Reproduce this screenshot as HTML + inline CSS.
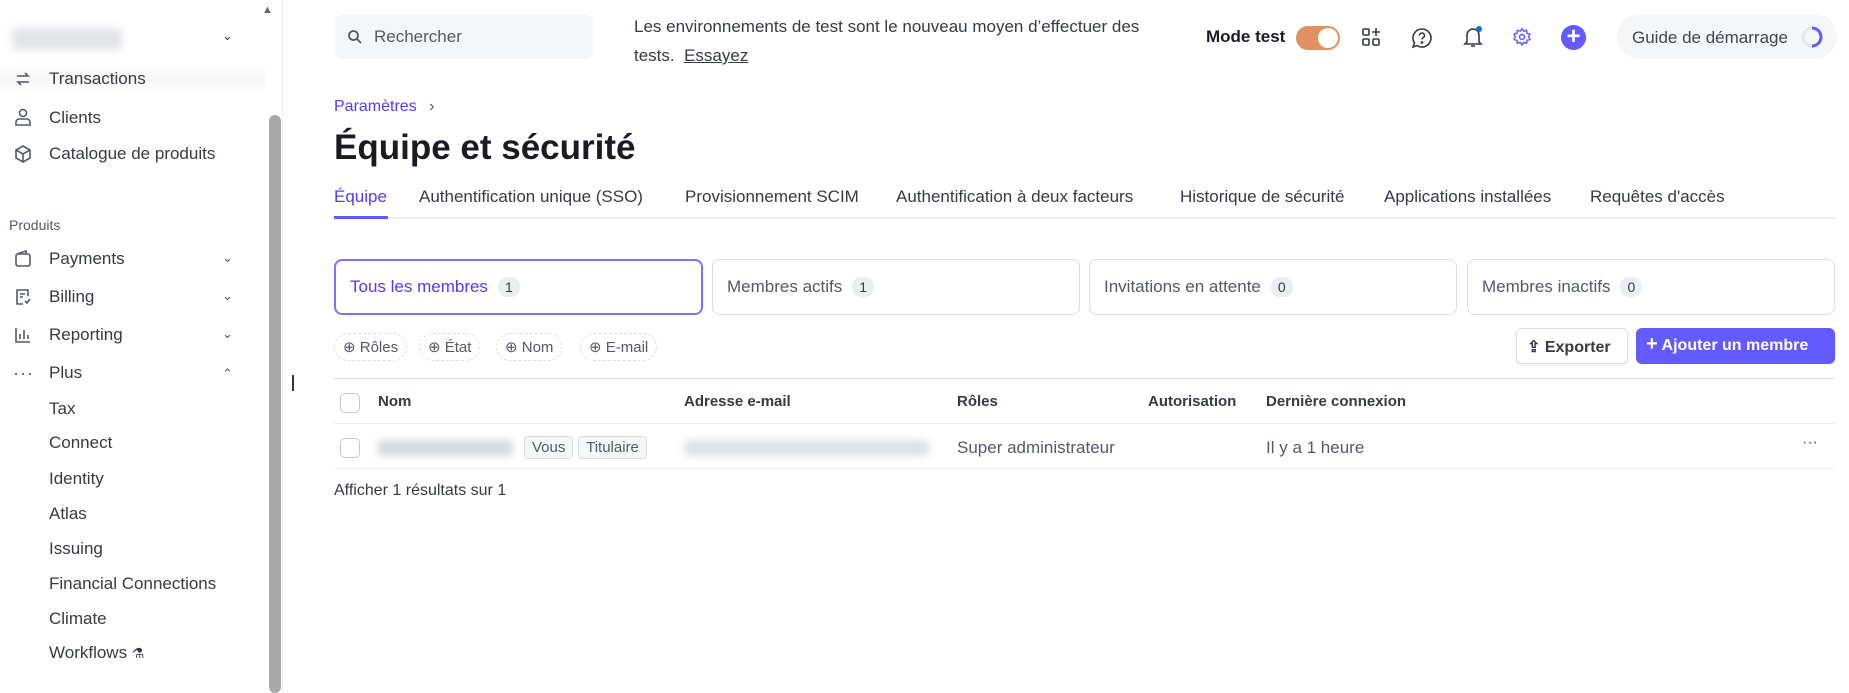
<!DOCTYPE html>
<html><head><meta charset="utf-8"><style>
*{box-sizing:border-box;margin:0;padding:0}
body{width:1849px;height:693px;overflow:hidden;background:#fff;font-family:"Liberation Sans",sans-serif;color:#353a44;font-size:17px;position:relative}
.a{position:absolute;white-space:nowrap}
.side{position:absolute;left:0;top:0;width:283px;height:693px;border-right:1px solid #ebeef1}
.it{position:absolute;left:49px;font-size:17px;color:#353a44}
.ic{position:absolute;left:13px;width:20px;height:20px}
.chev{position:absolute;left:222px;font-size:13px;color:#555}
.tab{position:absolute;top:187px;font-size:17px;color:#353a44}
.card{position:absolute;top:259px;height:56px;border:1px solid #d8dee4;border-radius:8px;padding:0 14px;display:flex;align-items:center;font-size:17px;color:#545969}
.badge{display:inline-block;margin-left:10px;background:#ebeef1;border-radius:9px;font-size:14px;padding:2px 7px;color:#353a44}
.chip{position:absolute;top:333px;height:28px;border:1px dashed #d8dee4;border-radius:14px;font-size:15px;padding:4px 8px 0 8px;color:#545969}
.th{position:absolute;top:393px;font-weight:bold;font-size:15px;color:#353a44}
.cb{position:absolute;width:20px;height:20px;border:1px solid #c0c8d2;border-radius:5px;left:340px}
.tag{display:inline-block;border:1px solid #d8dee4;background:#f5f6f8;border-radius:4px;font-size:15px;padding:2px 7px;color:#545969}
.blur{position:absolute;background:#d6d9de;filter:blur(4px);border-radius:4px}
</style></head><body>
<div class="side">
 <div class="blur" style="left:12px;top:28px;width:110px;height:22px;opacity:.7"></div>
 <div class="a" style="left:222px;top:28px;font-size:13px">&#8964;</div>
 <div class="a" style="left:262px;top:4px;font-size:11px;color:#666">▲</div>
 <div class="a" style="left:269px;top:115px;width:12px;height:578px;background:#a8a8a8;border-radius:6px"></div>
 <div class="a" style="left:0;top:62px;width:265px;height:30px;background:linear-gradient(#fff,#f6f6f7 60%,#fff);"></div>
 <svg class="ic" style="top:69px" viewBox="0 0 20 20" fill="none" stroke="#545969" stroke-width="1.6"><path d="M4 7h11l-3-3M16 13H5l3 3"/></svg>
 <div class="it" style="top:69px">Transactions</div>
 <svg class="ic" style="top:107px" viewBox="0 0 20 20" fill="none" stroke="#545969" stroke-width="1.6"><circle cx="10" cy="6" r="3.5"/><path d="M3 18v-3a3 3 0 0 1 3-3h8a3 3 0 0 1 3 3v3z"/></svg>
 <div class="it" style="top:108px">Clients</div>
 <svg class="ic" style="top:144px" viewBox="0 0 20 20" fill="none" stroke="#545969" stroke-width="1.6"><path d="M10 2l7 4v8l-7 4-7-4V6zM3 6l7 4 7-4M10 10v8"/></svg>
 <div class="it" style="top:144px">Catalogue de produits</div>
 <div class="a" style="left:9px;top:217px;font-size:14px;color:#545969">Produits</div>
 <svg class="ic" style="top:249px" viewBox="0 0 20 20" fill="none" stroke="#545969" stroke-width="1.6"><rect x="3" y="5" width="14" height="12" rx="2"/><path d="M4 5l9-3v3"/></svg>
 <div class="it" style="top:249px">Payments</div><div class="chev" style="top:250px">&#8964;</div>
 <svg class="ic" style="top:287px" viewBox="0 0 20 20" fill="none" stroke="#545969" stroke-width="1.6"><path d="M15 9V3H4v14h6M7 7h5M7 10h3M12 14l2 2 3-4"/></svg>
 <div class="it" style="top:287px">Billing</div><div class="chev" style="top:288px">&#8964;</div>
 <svg class="ic" style="top:325px" viewBox="0 0 20 20" fill="none" stroke="#545969" stroke-width="1.6"><path d="M3 3v14h14M7 14V9M11 14V5M15 14v-4"/></svg>
 <div class="it" style="top:325px">Reporting</div><div class="chev" style="top:326px">&#8964;</div>
 <div class="a" style="left:13px;top:363px;font-size:18px;color:#545969;letter-spacing:1px">···</div>
 <div class="it" style="top:363px">Plus</div><div class="chev" style="top:366px">&#8963;</div>
 <div class="it" style="top:399px">Tax</div>
 <div class="it" style="top:433px">Connect</div>
 <div class="it" style="top:469px">Identity</div>
 <div class="it" style="top:504px">Atlas</div>
 <div class="it" style="top:539px">Issuing</div>
 <div class="it" style="top:574px">Financial Connections</div>
 <div class="it" style="top:609px">Climate</div>
 <div class="it" style="top:643px">Workflows <span style="font-size:14px">⚗</span></div>
</div>
<div class="a" style="left:292px;top:375px;width:2px;height:16px;background:#333"></div>

<div class="a" style="left:335px;top:14px;width:258px;height:45px;background:#f5f6f8;border-radius:8px"></div>
<svg class="a" style="left:347px;top:29px" width="16" height="16" viewBox="0 0 16 16" fill="none" stroke="#545969" stroke-width="1.8"><circle cx="6.5" cy="6.5" r="4.5"/><path d="M10 10l4 4"/></svg>
<div class="a" style="left:374px;top:27px;font-size:17px;color:#545969">Rechercher</div>
<div class="a" style="left:634px;top:12px;font-size:17px;line-height:29px">Les environnements de test sont le nouveau moyen d’effectuer des<br>tests.&nbsp; <span style="text-decoration:underline">Essayez</span></div>

<div class="a" style="left:1206px;top:27px;font-size:17px;font-weight:bold;color:#1a1b25">Mode test</div>
<div class="a" style="left:1296px;top:26px;width:44px;height:24px;background:#e0915f;border-radius:12px"><div style="position:absolute;right:2px;top:2px;width:20px;height:20px;border-radius:10px;background:#fff"></div></div>
<svg class="a" style="left:1361px;top:27px" width="20" height="20" viewBox="0 0 20 20" fill="none" stroke="#353a44" stroke-width="1.6"><rect x="2" y="2" width="6" height="6" rx="1"/><rect x="2" y="12" width="6" height="6" rx="1"/><rect x="12" y="12" width="6" height="6" rx="1"/><path d="M15 1v8M11 5h8"/></svg>
<svg class="a" style="left:1411px;top:27px" width="22" height="22" viewBox="0 0 22 22" fill="none" stroke="#353a44" stroke-width="1.6"><path d="M11 2a9 9 0 1 1-5 16.5L2 20l1.5-4A9 9 0 0 1 11 2z"/><path d="M8.5 8.5a2.5 2.5 0 1 1 3.5 2.3c-.7.4-1 .9-1 1.7"/><circle cx="11" cy="15.5" r=".6" fill="#353a44"/></svg>
<svg class="a" style="left:1462px;top:25px" width="22" height="24" viewBox="0 0 22 24" fill="none" stroke="#353a44" stroke-width="1.6"><path d="M5 17V10a6 6 0 0 1 12 0v7l2 2H3zM9 21h4"/><circle cx="17" cy="4" r="3" fill="#0570de" stroke="none"/></svg>
<svg class="a" style="left:1512px;top:27px" width="20" height="20" viewBox="0 0 24 24" fill="none" stroke="#635bff" stroke-width="1.8"><circle cx="12" cy="12" r="3"/><path d="M12 2l2 3 3.5-1 .5 3.5 3.5 1-1.5 3.5 1.5 3-3.5 1-.5 3.5-3.5-1-2 3-2-3-3.5 1-.5-3.5-3.5-1 1.5-3-1.5-3.5 3.5-1 .5-3.5 3.5 1z"/></svg>
<div class="a" style="left:1561px;top:25px;width:25px;height:25px;border-radius:13px;background:#635bff;color:#fff;font-size:24px;line-height:24px;text-align:center;font-weight:bold">+</div>
<div class="a" style="left:1617px;top:14px;width:220px;height:45px;background:#f5f6f8;border-radius:23px"></div>
<div class="a" style="left:1632px;top:28px;font-size:17px;color:#414552">Guide de démarrage</div>
<svg class="a" style="left:1800px;top:25px" width="24" height="24" viewBox="0 0 24 24" fill="none" stroke-width="3"><circle cx="12" cy="12" r="9" stroke="#e3e6ea"/><path d="M12 3a9 9 0 0 1 0 18" stroke="#635bff"/></svg>

<div class="a" style="left:334px;top:98px;font-size:16px;color:#533afd">Paramètres <span style="color:#545969;margin-left:8px">›</span></div>
<div class="a" style="left:334px;top:128px;font-size:35px;font-weight:bold;color:#1a1b25">Équipe et sécurité</div>
<div class="a" style="left:334px;top:217px;width:1501px;height:2px;background:#ebeef1"></div>
<div class="a" style="left:334px;top:216px;width:54px;height:3px;background:#635bff"></div>
<div class="tab" style="left:334px;color:#533afd">Équipe</div>
<div class="tab" style="left:419px">Authentification unique (SSO)</div>
<div class="tab" style="left:685px">Provisionnement SCIM</div>
<div class="tab" style="left:896px">Authentification à deux facteurs</div>
<div class="tab" style="left:1180px">Historique de sécurité</div>
<div class="tab" style="left:1384px">Applications installées</div>
<div class="tab" style="left:1590px">Requêtes d'accès</div>

<div class="card" style="left:334px;width:369px;border:2px solid #7a73ff;color:#533afd">Tous les membres<span class="badge">1</span></div>
<div class="card" style="left:712px;width:368px">Membres actifs<span class="badge">1</span></div>
<div class="card" style="left:1089px;width:368px">Invitations en attente<span class="badge">0</span></div>
<div class="card" style="left:1467px;width:368px">Membres inactifs<span class="badge">0</span></div>

<div class="chip" style="left:334px">⊕ Rôles</div>
<div class="chip" style="left:419px">⊕ État</div>
<div class="chip" style="left:496px">⊕ Nom</div>
<div class="chip" style="left:580px">⊕ E-mail</div>

<div class="a" style="left:1516px;top:328px;width:112px;height:36px;border:1px solid #d8dee4;border-radius:6px;font-size:16px;font-weight:bold;padding:8px 0 0 10px;color:#353a44;box-shadow:0 1px 2px rgba(0,0,0,.08)">⇪ Exporter</div>
<div class="a" style="left:1636px;top:328px;width:199px;height:36px;background:#635bff;border-radius:6px;font-size:16px;font-weight:bold;padding:8px 0 0 10px;color:#fff"><span style="font-size:20px;line-height:16px">+</span> Ajouter un membre</div>

<div class="a" style="left:334px;top:378px;width:1501px;height:1px;background:#d8dee4"></div>
<div class="a" style="left:334px;top:423px;width:1501px;height:1px;background:#ebeef1"></div>
<div class="a" style="left:334px;top:468px;width:1501px;height:1px;background:#ebeef1"></div>
<div class="cb" style="top:393px"></div>
<div class="th" style="left:378px">Nom</div>
<div class="th" style="left:684px">Adresse e-mail</div>
<div class="th" style="left:957px">Rôles</div>
<div class="th" style="left:1148px">Autorisation</div>
<div class="th" style="left:1266px">Dernière connexion</div>
<div class="cb" style="top:438px"></div>
<div class="blur" style="left:378px;top:440px;width:135px;height:16px"></div>
<div class="a" style="left:524px;top:436px"><span class="tag">Vous</span> <span class="tag">Titulaire</span></div>
<div class="blur" style="left:684px;top:440px;width:245px;height:16px;opacity:.8"></div>
<div class="a" style="left:957px;top:438px;font-size:17px;color:#545969">Super administrateur</div>
<div class="a" style="left:1266px;top:438px;font-size:17px;color:#545969">Il y a 1 heure</div>
<div class="a" style="left:1802px;top:434px;font-size:16px;color:#545969">···</div>
<div class="a" style="left:334px;top:482px;font-size:16px;color:#353a44">Afficher 1 résultats sur 1</div>
</body></html>
